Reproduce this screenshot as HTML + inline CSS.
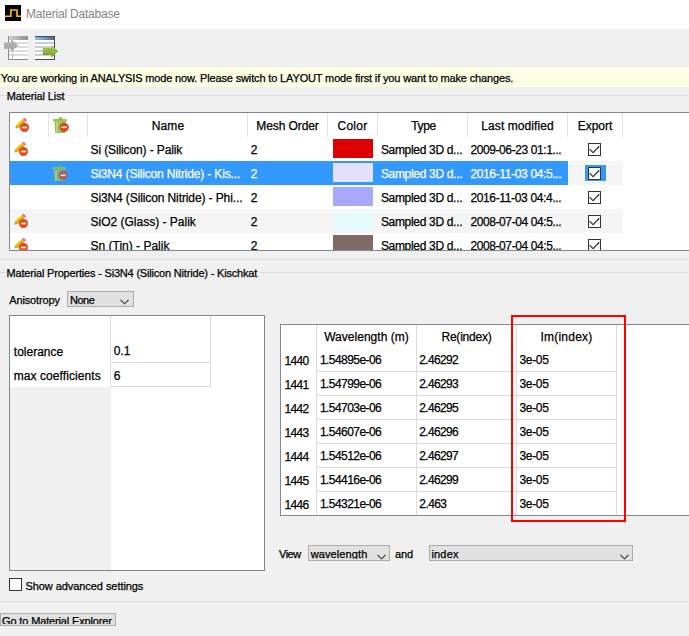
<!DOCTYPE html>
<html><head><meta charset="utf-8"><style>
html,body{margin:0;padding:0}
body{width:689px;height:636px;overflow:hidden;position:relative;background:#f0f0f0;font-family:"Liberation Sans",sans-serif}
body>div,body>svg,div>div{position:absolute}
.t{white-space:nowrap;-webkit-text-stroke:0.25px currentColor}
svg{position:absolute}
</style></head><body>
<div style="left:0px;top:0px;width:689px;height:29px;background:#fff;"></div>
<svg style="left:5px;top:5px" width="16" height="16" viewBox="0 0 16 16"><rect width="16" height="16" fill="#000"/>
<path d="M0 11.25H5.9V5H12V11.25H16" fill="none" stroke="#fdb515" stroke-width="1.7"/></svg>
<div class="t" style="left:25.9px;top:6px;font-size:12px;line-height:16px;color:#858585;letter-spacing:-0.212px;-webkit-text-stroke:0;">Material Database</div>
<svg style="left:0px;top:30px" width="64" height="36" viewBox="0 30 64 36">
<defs>
<linearGradient id="gh" x1="0" x2="1"><stop offset="0" stop-color="#d4d4d4"/><stop offset="1" stop-color="#8e8e8e"/></linearGradient>
<linearGradient id="bh" x1="0" x2="1"><stop offset="0" stop-color="#98c0fa"/><stop offset="1" stop-color="#45679e"/></linearGradient>
<linearGradient id="ga" x1="0" y1="0" x2="0" y2="1"><stop offset="0" stop-color="#a6c95a"/><stop offset="1" stop-color="#78a32c"/></linearGradient>
<linearGradient id="gg" x1="0" y1="0" x2="0" y2="1"><stop offset="0" stop-color="#b8b8b8"/><stop offset="1" stop-color="#a2a2a2"/></linearGradient>
</defs>
<rect x="8" y="36" width="20" height="24" fill="#fff"/>
<rect x="8" y="36" width="20" height="4" fill="url(#gh)"/>
<rect x="9" y="42.1" width="19" height="1.8" fill="#d9d9d9"/>
<rect x="9" y="46.1" width="19" height="1.8" fill="#d9d9d9"/>
<rect x="9" y="50.1" width="19" height="1.8" fill="#d9d9d9"/>
<rect x="9" y="54" width="19" height="1.8" fill="#d9d9d9"/>
<rect x="8" y="36" width="1" height="24" fill="#8a8a8a"/>
<rect x="8" y="59" width="20" height="1" fill="#8a8a8a"/>
<rect x="12" y="51.6" width="1" height="7.4" fill="#c4c4c4"/>
<path d="M4 42.4H11V38.8L18.1 45.4L11 51.8V48.8H4Z" fill="url(#gg)"/>
<rect x="35" y="36" width="20" height="24" fill="#fff"/>
<rect x="35" y="37" width="19" height="3" fill="url(#bh)"/>
<rect x="35" y="42.1" width="19" height="1.8" fill="#c6c9d0"/>
<rect x="35" y="46.1" width="19" height="1.8" fill="#c6c9d0"/>
<rect x="35" y="50.1" width="19" height="1.8" fill="#c6c9d0"/>
<rect x="35" y="54" width="19" height="1.8" fill="#c6c9d0"/>
<rect x="35" y="36" width="20" height="1" fill="#4e4752"/>
<rect x="54" y="36" width="1" height="24" fill="#4e4752"/>
<rect x="35" y="59" width="20" height="1" fill="#4e4752"/>
<path d="M42.8 47.9H51.3V45L58.2 51.2L51.3 57.8V54.7H42.8Z" fill="url(#ga)"/>
<rect x="42.8" y="54" width="8.5" height="0.8" fill="#6a9422"/>
</svg>
<div style="left:0px;top:67px;width:689px;height:20px;background:#fdffe5;"></div>
<div class="t" style="left:0.8px;top:70px;font-size:11px;line-height:16px;color:#000;letter-spacing:-0.147px;">You are working in ANALYSIS mode now. Please switch to LAYOUT mode first if you want to make changes.</div>
<div style="left:0px;top:95px;width:7px;height:1px;background:#dcdcdc;"></div>
<div style="left:67px;top:95px;width:622px;height:1px;background:#dcdcdc;"></div>
<div class="t" style="left:6.7px;top:88px;font-size:11px;line-height:16px;color:#000;letter-spacing:-0.116px;">Material List</div>
<div style="left:0px;top:259px;width:689px;height:1px;background:#dcdcdc;"></div>
<div style="left:9px;top:112px;width:680px;height:139px;background:#828790;"></div>
<div style="left:10px;top:113px;width:679px;height:137px;background:#fff;"></div>
<div style="left:48px;top:113px;width:1px;height:24px;background:#e5e5e5;"></div>
<div style="left:87px;top:113px;width:1px;height:24px;background:#e5e5e5;"></div>
<div style="left:247px;top:113px;width:1px;height:24px;background:#e5e5e5;"></div>
<div style="left:327px;top:113px;width:1px;height:24px;background:#e5e5e5;"></div>
<div style="left:377px;top:113px;width:1px;height:24px;background:#e5e5e5;"></div>
<div style="left:467px;top:113px;width:1px;height:24px;background:#e5e5e5;"></div>
<div style="left:567px;top:113px;width:1px;height:24px;background:#e5e5e5;"></div>
<div style="left:622px;top:113px;width:1px;height:24px;background:#e5e5e5;"></div>
<svg style="left:11px;top:113px" width="24" height="24" viewBox="0 0 24 24">
<path d="M5.05 12.15L11.85 6L14.4 8.82L7.6 14.97Z" fill="#f7c300"/>
<path d="M6.33 13.56L13.12 7.41L14.4 8.82L7.6 14.97Z" fill="#e6a600"/>
<path d="M4.3 15.4L5.05 12.15L7.6 14.97Z" fill="#c49a55"/>
<path d="M11.85 6L13.63 4.39L16.18 7.21L14.4 8.82Z" fill="#e070b0"/>
<circle cx="13.5" cy="14.5" r="4.5" fill="#df4a18"/>
<rect x="10.9" y="13.7" width="5.2" height="1.6" fill="#fff"/>
</svg>
<svg style="left:48px;top:113px;opacity:1" width="24" height="24" viewBox="0 0 24 24">
<path d="M6.6 8.2H17.8L17.3 19.4Q17.2 20.1 16.4 20.1H8.1Q7.3 20.1 7.2 19.4Z" fill="#93bc4c"/>
<rect x="8.2" y="9" width="1.6" height="10.6" fill="#c3dc8e"/>
<rect x="11.4" y="9" width="1.2" height="10.6" fill="#a9cc6a"/>
<rect x="5" y="6" width="14" height="2.6" rx="1.3" fill="#8ab83e"/>
<rect x="5.6" y="6.6" width="12.8" height="0.9" fill="#b5d67a"/>
<ellipse cx="12.5" cy="5.5" rx="1.9" ry="1.3" fill="#8ab83e"/>
<circle cx="16.2" cy="14.3" r="4.6" fill="#df4a18"/>
<rect x="13.6" y="13.5" width="5.2" height="1.6" fill="#fff"/>
</svg>
<div class="t" style="left:88.5px;top:118px;width:159px;text-align:center;font-size:12px;line-height:16px;color:#000;letter-spacing:0.095px;">Name</div>
<div class="t" style="left:248px;top:118px;width:79px;text-align:center;font-size:12px;line-height:16px;color:#000;letter-spacing:-0.084px;">Mesh Order</div>
<div class="t" style="left:328px;top:118px;width:49px;text-align:center;font-size:12px;line-height:16px;color:#000;letter-spacing:0.228px;">Color</div>
<div class="t" style="left:379px;top:118px;width:89px;text-align:center;font-size:12px;line-height:16px;color:#000;letter-spacing:-0.372px;">Type</div>
<div class="t" style="left:468px;top:118px;width:99px;text-align:center;font-size:12px;line-height:16px;color:#000;letter-spacing:0.069px;">Last modified</div>
<div class="t" style="left:568px;top:118px;width:54px;text-align:center;font-size:12px;line-height:16px;color:#000;letter-spacing:-0.058px;">Export</div>
<svg style="left:10px;top:137px" width="24" height="24" viewBox="0 0 24 24">
<path d="M5.05 12.15L11.85 6L14.4 8.82L7.6 14.97Z" fill="#f7c300"/>
<path d="M6.33 13.56L13.12 7.41L14.4 8.82L7.6 14.97Z" fill="#e6a600"/>
<path d="M4.3 15.4L5.05 12.15L7.6 14.97Z" fill="#c49a55"/>
<path d="M11.85 6L13.63 4.39L16.18 7.21L14.4 8.82Z" fill="#e070b0"/>
<circle cx="13.5" cy="14.5" r="4.5" fill="#df4a18"/>
<rect x="10.9" y="13.7" width="5.2" height="1.6" fill="#fff"/>
</svg>
<div class="t" style="left:90.5px;top:142px;font-size:12px;line-height:16px;color:#000;letter-spacing:-0.117px;">Si (Silicon) - Palik</div>
<div class="t" style="left:250.8px;top:142px;font-size:12px;line-height:16px;color:#000;">2</div>
<div style="left:333px;top:139px;width:40px;height:19px;background:#dd0000;"></div>
<div class="t" style="left:380.9px;top:142px;font-size:12px;line-height:16px;color:#000;letter-spacing:-0.318px;">Sampled 3D d...</div>
<div class="t" style="left:470.4px;top:142px;font-size:12px;line-height:16px;color:#000;letter-spacing:-0.399px;">2009-06-23 01:1...</div>
<svg style="left:588px;top:143px" width="13" height="13" viewBox="0 0 13 13">
<rect x="0.5" y="0.5" width="12" height="12" fill="#fff" stroke="#333"/>
<path d="M1.6 6.1L5.1 9.6L11.3 3.2" fill="none" stroke="#333" stroke-width="1.25"/>
</svg>
<div style="left:10px;top:161px;width:613px;height:24px;background:#f5f5f5;"></div>
<div style="left:10px;top:161px;width:558px;height:24px;background:#3399ff;"></div>
<svg style="left:46.8px;top:161px;opacity:0.72" width="24" height="24" viewBox="0 0 24 24">
<path d="M6.6 8.2H17.8L17.3 19.4Q17.2 20.1 16.4 20.1H8.1Q7.3 20.1 7.2 19.4Z" fill="#93bc4c"/>
<rect x="8.2" y="9" width="1.6" height="10.6" fill="#c3dc8e"/>
<rect x="11.4" y="9" width="1.2" height="10.6" fill="#a9cc6a"/>
<rect x="5" y="6" width="14" height="2.6" rx="1.3" fill="#8ab83e"/>
<rect x="5.6" y="6.6" width="12.8" height="0.9" fill="#b5d67a"/>
<ellipse cx="12.5" cy="5.5" rx="1.9" ry="1.3" fill="#8ab83e"/>
<circle cx="16.2" cy="14.3" r="4.6" fill="#df4a18"/>
<rect x="13.6" y="13.5" width="5.2" height="1.6" fill="#fff"/>
</svg>
<div class="t" style="left:90.5px;top:166px;font-size:12px;line-height:16px;color:#fff;letter-spacing:-0.162px;">Si3N4 (Silicon Nitride) - Kis...</div>
<div class="t" style="left:250.8px;top:166px;font-size:12px;line-height:16px;color:#fff;">2</div>
<div style="left:333px;top:163px;width:40px;height:19px;background:#e4e0fe;"></div>
<div class="t" style="left:380.9px;top:166px;font-size:12px;line-height:16px;color:#fff;letter-spacing:-0.318px;">Sampled 3D d...</div>
<div class="t" style="left:470.4px;top:166px;font-size:12px;line-height:16px;color:#fff;letter-spacing:-0.346px;">2016-11-03 04:5...</div>
<div style="left:585px;top:165px;width:21px;height:16px;background:#3399ff;"></div>
<svg style="left:588px;top:167px" width="13" height="13" viewBox="0 0 13 13">
<rect x="0.5" y="0.5" width="12" height="12" fill="#fff" stroke="#333"/>
<path d="M1.6 6.1L5.1 9.6L11.3 3.2" fill="none" stroke="#333" stroke-width="1.25"/>
</svg>
<div class="t" style="left:90.5px;top:190px;font-size:12px;line-height:16px;color:#000;letter-spacing:-0.109px;">Si3N4 (Silicon Nitride) - Phi...</div>
<div class="t" style="left:250.8px;top:190px;font-size:12px;line-height:16px;color:#000;">2</div>
<div style="left:333px;top:187px;width:40px;height:19px;background:#a8a8fd;"></div>
<div class="t" style="left:380.9px;top:190px;font-size:12px;line-height:16px;color:#000;letter-spacing:-0.318px;">Sampled 3D d...</div>
<div class="t" style="left:470.4px;top:190px;font-size:12px;line-height:16px;color:#000;letter-spacing:-0.346px;">2016-11-03 04:4...</div>
<svg style="left:588px;top:191px" width="13" height="13" viewBox="0 0 13 13">
<rect x="0.5" y="0.5" width="12" height="12" fill="#fff" stroke="#333"/>
<path d="M1.6 6.1L5.1 9.6L11.3 3.2" fill="none" stroke="#333" stroke-width="1.25"/>
</svg>
<div style="left:10px;top:209px;width:613px;height:24px;background:#f5f5f5;"></div>
<svg style="left:10px;top:209px" width="24" height="24" viewBox="0 0 24 24">
<path d="M5.05 12.15L11.85 6L14.4 8.82L7.6 14.97Z" fill="#f7c300"/>
<path d="M6.33 13.56L13.12 7.41L14.4 8.82L7.6 14.97Z" fill="#e6a600"/>
<path d="M4.3 15.4L5.05 12.15L7.6 14.97Z" fill="#c49a55"/>
<path d="M11.85 6L13.63 4.39L16.18 7.21L14.4 8.82Z" fill="#e070b0"/>
<circle cx="13.5" cy="14.5" r="4.5" fill="#df4a18"/>
<rect x="10.9" y="13.7" width="5.2" height="1.6" fill="#fff"/>
</svg>
<div class="t" style="left:90.5px;top:214px;font-size:12px;line-height:16px;color:#000;">SiO2 (Glass) - Palik</div>
<div class="t" style="left:250.8px;top:214px;font-size:12px;line-height:16px;color:#000;">2</div>
<div style="left:333px;top:211px;width:40px;height:19px;background:#e6fcfc;"></div>
<div class="t" style="left:380.9px;top:214px;font-size:12px;line-height:16px;color:#000;letter-spacing:-0.318px;">Sampled 3D d...</div>
<div class="t" style="left:470.4px;top:214px;font-size:12px;line-height:16px;color:#000;letter-spacing:-0.399px;">2008-07-04 04:5...</div>
<svg style="left:588px;top:215px" width="13" height="13" viewBox="0 0 13 13">
<rect x="0.5" y="0.5" width="12" height="12" fill="#fff" stroke="#333"/>
<path d="M1.6 6.1L5.1 9.6L11.3 3.2" fill="none" stroke="#333" stroke-width="1.25"/>
</svg>
<svg style="left:10px;top:233px" width="24" height="24" viewBox="0 0 24 24">
<path d="M5.05 12.15L11.85 6L14.4 8.82L7.6 14.97Z" fill="#f7c300"/>
<path d="M6.33 13.56L13.12 7.41L14.4 8.82L7.6 14.97Z" fill="#e6a600"/>
<path d="M4.3 15.4L5.05 12.15L7.6 14.97Z" fill="#c49a55"/>
<path d="M11.85 6L13.63 4.39L16.18 7.21L14.4 8.82Z" fill="#e070b0"/>
<circle cx="13.5" cy="14.5" r="4.5" fill="#df4a18"/>
<rect x="10.9" y="13.7" width="5.2" height="1.6" fill="#fff"/>
</svg>
<div class="t" style="left:90.5px;top:238px;font-size:12px;line-height:16px;color:#000;">Sn (Tin) - Palik</div>
<div class="t" style="left:250.8px;top:238px;font-size:12px;line-height:16px;color:#000;">2</div>
<div style="left:333px;top:235px;width:40px;height:19px;background:#7f6a64;"></div>
<div class="t" style="left:380.9px;top:238px;font-size:12px;line-height:16px;color:#000;letter-spacing:-0.318px;">Sampled 3D d...</div>
<div class="t" style="left:470.4px;top:238px;font-size:12px;line-height:16px;color:#000;letter-spacing:-0.399px;">2008-07-04 04:5...</div>
<svg style="left:588px;top:239px" width="13" height="13" viewBox="0 0 13 13">
<rect x="0.5" y="0.5" width="12" height="12" fill="#fff" stroke="#333"/>
<path d="M1.6 6.1L5.1 9.6L11.3 3.2" fill="none" stroke="#333" stroke-width="1.25"/>
</svg>
<div style="left:9px;top:250px;width:680px;height:1px;background:#828790;"></div>
<div style="left:0px;top:251px;width:689px;height:8px;background:#f0f0f0;"></div>
<div style="left:0px;top:272px;width:7px;height:1px;background:#dcdcdc;"></div>
<div style="left:260px;top:272px;width:429px;height:1px;background:#dcdcdc;"></div>
<div class="t" style="left:6.5px;top:265px;font-size:11px;line-height:16px;color:#000;letter-spacing:-0.186px;">Material Properties - Si3N4 (Silicon Nitride) - Kischkat</div>
<div style="left:0px;top:601px;width:689px;height:1px;background:#dcdcdc;"></div>
<div class="t" style="left:9.299999999999999px;top:292px;font-size:11px;line-height:16px;color:#000;letter-spacing:-0.143px;">Anisotropy</div>
<div style="left:67px;top:291px;width:65px;height:14px;border:1px solid #adadad;background:#e1e1e1;"></div>
<div class="t" style="left:69.9px;top:292px;font-size:11px;line-height:16px;color:#000;letter-spacing:-0.432px;">None</div>
<svg style="left:120px;top:299px" width="9" height="6" viewBox="0 0 9 6"><path d="M0.5 0.8L4.5 4.8L8.5 0.8" fill="none" stroke="#333" stroke-width="1.1"/></svg>
<div style="left:9px;top:315px;width:256px;height:256px;background:#828790;"></div>
<div style="left:10px;top:316px;width:254px;height:254px;background:#fff;"></div>
<div style="left:10px;top:387px;width:101px;height:183px;background:#f0f0f0;"></div>
<div style="left:110px;top:316px;width:1px;height:71px;background:#dcdcdc;"></div>
<div style="left:210px;top:316px;width:1px;height:71px;background:#dcdcdc;"></div>
<div style="left:110px;top:362px;width:101px;height:1px;background:#dcdcdc;"></div>
<div style="left:110px;top:386px;width:101px;height:1px;background:#dcdcdc;"></div>
<div class="t" style="left:13.8px;top:344px;font-size:12px;line-height:16px;color:#000;letter-spacing:0.003px;">tolerance</div>
<div class="t" style="left:113.7px;top:343px;font-size:12px;line-height:16px;color:#000;">0.1</div>
<div class="t" style="left:13.700000000000001px;top:368px;font-size:12px;line-height:16px;color:#000;letter-spacing:0.078px;">max coefficients</div>
<div class="t" style="left:113.7px;top:368px;font-size:12px;line-height:16px;color:#000;">6</div>
<div style="left:9px;top:578px;width:11px;height:11px;border:1px solid #333;background:#fff;"></div>
<div class="t" style="left:25.4px;top:578px;font-size:11px;line-height:16px;color:#000;letter-spacing:-0.060px;">Show advanced settings</div>
<div style="left:0px;top:613px;width:114px;height:11px;border:1px solid #adadad;background:#e1e1e1;"></div>
<div class="t" style="left:2.0999999999999996px;top:613px;font-size:11px;line-height:16px;color:#000;letter-spacing:-0.150px;">Go to Material Explorer</div>
<div style="left:1px;top:624px;width:114px;height:1px;background:#e1e1e1;"></div>
<div style="left:0px;top:625px;width:116px;height:1px;background:#adadad;"></div>
<div style="left:0px;top:626px;width:120px;height:10px;background:#f0f0f0;"></div>
<div style="left:280px;top:324px;width:409px;height:192px;background:#828790;"></div>
<div style="left:281px;top:325px;width:408px;height:190px;background:#fff;"></div>
<div style="left:316px;top:325px;width:1px;height:190px;background:#dcdcdc;"></div>
<div style="left:416px;top:325px;width:1px;height:190px;background:#dcdcdc;"></div>
<div style="left:516px;top:325px;width:1px;height:190px;background:#dcdcdc;"></div>
<div style="left:616px;top:325px;width:1px;height:190px;background:#dcdcdc;"></div>
<div style="left:317px;top:371px;width:299px;height:1px;background:#dcdcdc;"></div>
<div style="left:317px;top:395px;width:299px;height:1px;background:#dcdcdc;"></div>
<div style="left:317px;top:419px;width:299px;height:1px;background:#dcdcdc;"></div>
<div style="left:317px;top:443px;width:299px;height:1px;background:#dcdcdc;"></div>
<div style="left:317px;top:467px;width:299px;height:1px;background:#dcdcdc;"></div>
<div style="left:317px;top:491px;width:299px;height:1px;background:#dcdcdc;"></div>
<div class="t" style="left:317px;top:329px;width:99px;text-align:center;font-size:12px;line-height:16px;color:#000;letter-spacing:0.035px;">Wavelength (m)</div>
<div class="t" style="left:417px;top:329px;width:99px;text-align:center;font-size:12px;line-height:16px;color:#000;letter-spacing:-0.216px;">Re(index)</div>
<div class="t" style="left:517px;top:329px;width:99px;text-align:center;font-size:12px;line-height:16px;color:#000;letter-spacing:0.211px;">Im(index)</div>
<div class="t" style="left:284.40000000000003px;top:353px;font-size:12px;line-height:16px;color:#000;letter-spacing:-0.601px;">1440</div>
<div class="t" style="left:319.90000000000003px;top:352px;font-size:12px;line-height:16px;color:#000;letter-spacing:-0.551px;">1.54895e-06</div>
<div class="t" style="left:419.35px;top:352px;font-size:12px;line-height:16px;color:#000;letter-spacing:-0.665px;">2.46292</div>
<div class="t" style="left:519.4px;top:352px;font-size:12px;line-height:16px;color:#000;letter-spacing:-0.301px;">3e-05</div>
<div class="t" style="left:284.40000000000003px;top:377px;font-size:12px;line-height:16px;color:#000;letter-spacing:-0.601px;">1441</div>
<div class="t" style="left:319.90000000000003px;top:376px;font-size:12px;line-height:16px;color:#000;letter-spacing:-0.551px;">1.54799e-06</div>
<div class="t" style="left:419.35px;top:376px;font-size:12px;line-height:16px;color:#000;letter-spacing:-0.665px;">2.46293</div>
<div class="t" style="left:519.4px;top:376px;font-size:12px;line-height:16px;color:#000;letter-spacing:-0.301px;">3e-05</div>
<div class="t" style="left:284.40000000000003px;top:401px;font-size:12px;line-height:16px;color:#000;letter-spacing:-0.601px;">1442</div>
<div class="t" style="left:319.90000000000003px;top:400px;font-size:12px;line-height:16px;color:#000;letter-spacing:-0.551px;">1.54703e-06</div>
<div class="t" style="left:419.35px;top:400px;font-size:12px;line-height:16px;color:#000;letter-spacing:-0.665px;">2.46295</div>
<div class="t" style="left:519.4px;top:400px;font-size:12px;line-height:16px;color:#000;letter-spacing:-0.301px;">3e-05</div>
<div class="t" style="left:284.40000000000003px;top:425px;font-size:12px;line-height:16px;color:#000;letter-spacing:-0.601px;">1443</div>
<div class="t" style="left:319.90000000000003px;top:424px;font-size:12px;line-height:16px;color:#000;letter-spacing:-0.551px;">1.54607e-06</div>
<div class="t" style="left:419.35px;top:424px;font-size:12px;line-height:16px;color:#000;letter-spacing:-0.665px;">2.46296</div>
<div class="t" style="left:519.4px;top:424px;font-size:12px;line-height:16px;color:#000;letter-spacing:-0.301px;">3e-05</div>
<div class="t" style="left:284.40000000000003px;top:449px;font-size:12px;line-height:16px;color:#000;letter-spacing:-0.601px;">1444</div>
<div class="t" style="left:319.90000000000003px;top:448px;font-size:12px;line-height:16px;color:#000;letter-spacing:-0.551px;">1.54512e-06</div>
<div class="t" style="left:419.35px;top:448px;font-size:12px;line-height:16px;color:#000;letter-spacing:-0.665px;">2.46297</div>
<div class="t" style="left:519.4px;top:448px;font-size:12px;line-height:16px;color:#000;letter-spacing:-0.301px;">3e-05</div>
<div class="t" style="left:284.40000000000003px;top:473px;font-size:12px;line-height:16px;color:#000;letter-spacing:-0.601px;">1445</div>
<div class="t" style="left:319.90000000000003px;top:472px;font-size:12px;line-height:16px;color:#000;letter-spacing:-0.551px;">1.54416e-06</div>
<div class="t" style="left:419.35px;top:472px;font-size:12px;line-height:16px;color:#000;letter-spacing:-0.665px;">2.46299</div>
<div class="t" style="left:519.4px;top:472px;font-size:12px;line-height:16px;color:#000;letter-spacing:-0.301px;">3e-05</div>
<div class="t" style="left:284.40000000000003px;top:497px;font-size:12px;line-height:16px;color:#000;letter-spacing:-0.601px;">1446</div>
<div class="t" style="left:319.90000000000003px;top:496px;font-size:12px;line-height:16px;color:#000;letter-spacing:-0.551px;">1.54321e-06</div>
<div class="t" style="left:419.35px;top:496px;font-size:12px;line-height:16px;color:#000;letter-spacing:-0.608px;">2.463</div>
<div class="t" style="left:519.4px;top:496px;font-size:12px;line-height:16px;color:#000;letter-spacing:-0.301px;">3e-05</div>
<div style="left:511px;top:315px;width:111px;height:203px;border:2px solid #ff0000"></div>
<div class="t" style="left:279.0px;top:546px;font-size:11px;line-height:16px;color:#000;letter-spacing:-0.485px;">View</div>
<div style="left:308px;top:545px;width:80px;height:14px;border:1px solid #adadad;background:#e1e1e1;"></div>
<div class="t" style="left:310.7px;top:546px;font-size:11px;line-height:16px;color:#000;letter-spacing:0.105px;">wavelength</div>
<div style="left:309px;top:559px;width:80px;height:1px;background:#e1e1e1;"></div>
<div style="left:308px;top:560px;width:82px;height:1px;background:#adadad;"></div>
<div style="left:300px;top:561px;width:340px;height:4px;background:#f0f0f0;"></div>
<svg style="left:376.5px;top:553.5px" width="9" height="6" viewBox="0 0 9 6"><path d="M0.5 0.8L4.5 4.8L8.5 0.8" fill="none" stroke="#333" stroke-width="1.1"/></svg>
<div class="t" style="left:395.0px;top:546px;font-size:11px;line-height:16px;color:#000;letter-spacing:-0.130px;">and</div>
<div style="left:429px;top:545px;width:202px;height:14px;border:1px solid #adadad;background:#e1e1e1;"></div>
<div class="t" style="left:431.5px;top:546px;font-size:11px;line-height:16px;color:#000;letter-spacing:0.151px;">index</div>
<svg style="left:619.8px;top:553.5px" width="9" height="6" viewBox="0 0 9 6"><path d="M0.5 0.8L4.5 4.8L8.5 0.8" fill="none" stroke="#333" stroke-width="1.1"/></svg>
</body></html>
